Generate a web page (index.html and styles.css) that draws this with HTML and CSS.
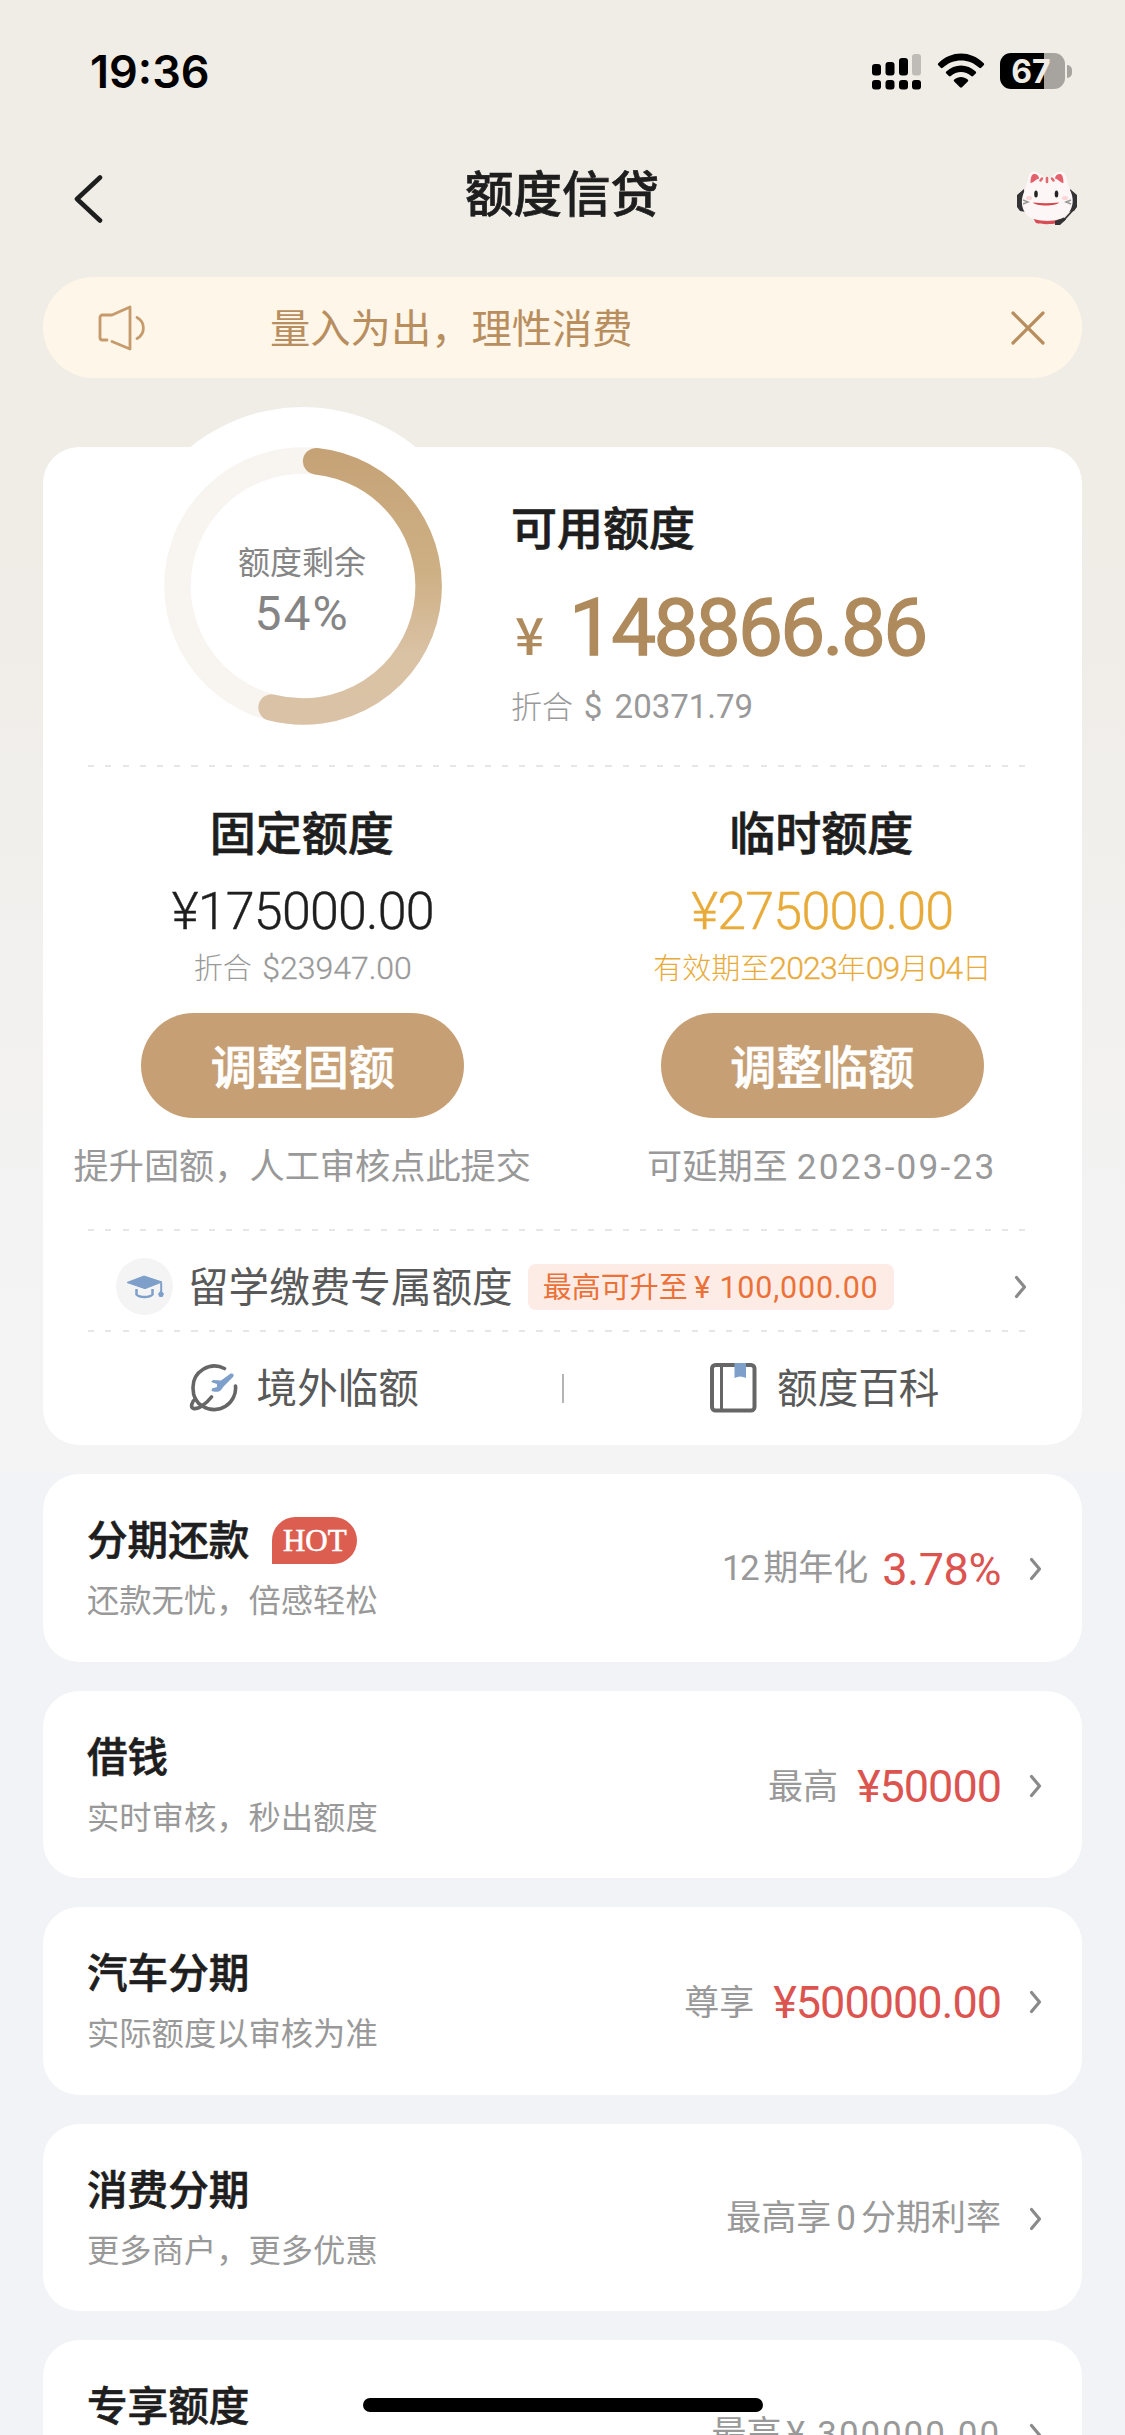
FILE: index.html
```html
<!DOCTYPE html>
<html lang="zh-CN">
<head>
<meta charset="utf-8">
<title>额度信贷</title>
<link rel="stylesheet" href="styles.css">
</head>
<body>
<svg class="defs" width="0" height="0">
  <symbol id="chevron" viewBox="0 0 14 24"><path d="M2.500 2.500 10.500 12l-8 9.500" fill="none" stroke="#8a8a8a" stroke-width="3.200" stroke-linecap="round" stroke-linejoin="round"/></symbol>
</svg>
<div class="page">
  <header class="status">
    <span class="time">19:36</span>
    <div class="status-icons">
      <svg class="signal" viewBox="0 0 49 36">
        <g><rect x="0" y="10" width="9" height="11.500" rx="3"/><rect x="13.500" y="8" width="9" height="13.500" rx="3"/><rect x="27" y="4" width="9" height="17.500" rx="3"/><rect x="40" y="0" width="9" height="21.500" rx="3" fill="#bfbcb8"/>
        <rect x="0" y="26" width="9" height="9.500" rx="3"/><rect x="13.500" y="26" width="9" height="9.500" rx="3"/><rect x="27" y="26" width="9" height="9.500" rx="3"/><rect x="40" y="26" width="9" height="9.500" rx="3"/></g>
      </svg>
      <svg class="wifi" viewBox="0 0 48 35"><path d="M1.300 10.300C14-2.800 34-2.800 46.700 10.300c.6.6.6 1.400 0 2l-2.500 2.500c-.6.6-1.300.6-1.900 0C32 5 16 5 5.700 14.800c-.6.6-1.300.6-1.900 0L1.300 12.300c-.6-.6-.6-1.400 0-2z"/><path d="M9.300 18.500c8.300-8 21.100-8 29.400 0 .6.600.6 1.400 0 2l-2.600 2.500c-.6.6-1.300.6-1.900 0-5.800-5.400-14.600-5.400-20.400 0-.6.6-1.300.6-1.900 0l-2.600-2.500c-.6-.6-.6-1.400 0-2z"/><path d="M17.300 26.600c3.900-3.400 9.500-3.400 13.400 0 .7.600.7 1.400.1 2l-5.800 5.700c-.6.600-1.400.6-2 0l-5.800-5.700c-.6-.6-.6-1.400.1-2z"/></svg>
      <div class="battery"><span class="cell">67</span><span class="nub"></span></div>
    </div>
  </header>
  <nav class="nav">
    <svg class="back" viewBox="0 0 30 50"><path d="M27 3.500 4 25l23 21.500" fill="none" stroke="#1e1e1e" stroke-width="4.600" stroke-linecap="round" stroke-linejoin="round"/></svg>
    <h1>额度信贷</h1>
    <svg class="cat" viewBox="0 0 62 56">
      <path d="M8 19 1 25v12l3 4 6 1zM54 19l7 6v12l-3 4-6 1z" fill="#333235"/>
      <path d="M13 5.500c1-4.800 8-5.500 12-.5l4 2.800h5L38 5c4-5 10.500-4.500 11.500.5L54 20c7 14 0 28-15 30H23C7 49 2 33 9 20z" fill="#fcf7f6"/>
      <path d="M14.500 13c0-5 1-9 3.500-9 3 0 5 2 5 4.500-4 1-4.500 4-8.500 4.500zM47.500 13c0-5-1-9-3.500-9-3 0-5 2-5 4.500 4 1 4.500 4 8.500 4.500z" fill="#e4606a"/>
      <path d="M31 8v4M26 8.500l-1.500 2M36 8.500l1.500 2" stroke="#e06a70" stroke-width="2.600" stroke-linecap="round"/>
      <path d="M17.500 49c9 2.500 19 2.500 27 0l-3 4c-6 1.600-16 1.600-21.500 0z" fill="#d94b55"/>
      <ellipse cx="20" cy="24" rx="1.800" ry="3.500" fill="#252326"/><ellipse cx="40.500" cy="24" rx="1.800" ry="3.500" fill="#252326"/>
      <path d="M17 32.500q13 1.500 26 0c-2 4-24 4-26 0z" fill="#d9454c"/>
      <path d="M7 30l5 2-5 2M55 30l-5 2 5 2" fill="none" stroke="#999" stroke-width="1.500"/>
      <ellipse cx="13" cy="28" rx="3" ry="2" fill="#fbd5d5"/><ellipse cx="49" cy="28" rx="3" ry="2" fill="#fbd5d5"/>
      <path d="M58 39 47 51" fill="none" stroke="#333235" stroke-width="1.800"/><path d="m39 51 9-3.500 2 2-6 5.500h-5z" fill="#333235"/>
    </svg>
  </nav>
  <div class="notice">
    <svg class="speaker" viewBox="0 0 50 46" fill="none" stroke="#c69a6b" stroke-width="2.800" stroke-linejoin="round" stroke-linecap="round"><path d="M9 35H4.500a2.500 2.500 0 0 1-2.500-2.500v-20A2.500 2.500 0 0 1 4.500 10H14L32 2v42L14 36.500"/><path d="M39 12.500c8.500 4.500 8.500 16.500 0 21"/></svg>
    <span>量入为出，理性消费</span>
    <svg class="close" viewBox="0 0 34 34"><path d="m2 2 30 30M32 2 2 32" stroke="#b98e5f" stroke-width="3.200" stroke-linecap="round"/></svg>
  </div>

  <section class="panel">
    <div class="hero">
      <div class="gauge">
        <svg viewBox="0 0 358 358">
          <defs><linearGradient id="arc" x1="0" y1="40" x2="0" y2="318" gradientUnits="userSpaceOnUse"><stop offset="0" stop-color="#c5a276"/><stop offset=".45" stop-color="#ceb085"/><stop offset=".75" stop-color="#dac2a5"/><stop offset="1" stop-color="#dac2a6"/></linearGradient></defs>
          <circle cx="179" cy="179" r="179" fill="#fff"/>
          <circle cx="179" cy="179" r="125.500" fill="none" stroke="#f8f5f1" stroke-width="26.500"/>
          <path d="M192.100 54.200A125.500 125.500 0 1 1 147.600 300.500" fill="none" stroke="url(#arc)" stroke-width="26.500" stroke-linecap="round"/>
        </svg>
        <div class="gauge-text"><span>额度剩余</span><b>54%</b></div>
      </div>
      <div class="available">
        <h2>可用额度</h2>
        <div class="big"><span class="yen">¥</span><span class="big-num">148866.86</span></div>
        <div class="conv">折合 <i>$ 20371.79</i></div>
      </div>
    </div>
    <div class="dash"></div>
    <div class="limits">
      <div class="limit">
        <h2>固定额度</h2>
        <div class="sum">¥175000.00</div>
        <div class="note">折合 <i class="usd">$23947.00</i></div>
        <button>调整固额</button>
        <p>提升固额，人工审核点此提交</p>
      </div>
      <div class="limit temp">
        <h2>临时额度</h2>
        <div class="sum">¥275000.00</div>
        <div class="note">有效期至<i>2023</i>年<i>09</i>月<i>04</i>日</div>
        <button>调整临额</button>
        <p>可延期至<span class="date">2023-09-23</span></p>
      </div>
    </div>
    <div class="dash"></div>
    <div class="study">
      <svg class="cap" viewBox="0 0 57 57"><circle cx="28.500" cy="28.500" r="28.500" fill="#f4f4f4"/><path d="M11 24.500 28 18l18 6-17 6.700z" fill="#7d9fca" stroke="#7d9fca" stroke-linejoin="round"/><path d="M20.500 31v5.500c3 3.300 13 3.300 16 0V31" fill="none" stroke="#7d9fca" stroke-width="2.500"/><path d="M45.200 25v8" stroke="#7d9fca" stroke-width="2"/><path d="m45 32 3 4-1.500 3h-3l-1.500-3z" fill="#7d9fca"/></svg>
      <span class="label">留学缴费专属额度</span>
      <span class="tag">最高可升至 <i>¥ 100,000.00</i></span>
      <svg class="chev"><use href="#chevron"/></svg>
    </div>
    <div class="dash"></div>
    <div class="links">
      <div class="link"><svg viewBox="0 0 50 50"><g fill="none" stroke="#666" stroke-width="3.600" stroke-linecap="round"><path d="M35.500 5.500A21.500 21.500 0 0 0 4 25C4 33 7.500 40 14 43.500A21.500 21.500 0 0 0 46.500 23"/><path d="M22.500 34C17 41 9 46.500 4.500 45.500 1 44.500 3 38 6.500 36"/></g><path d="m22 19 2-2 8 .5 9-6.500c2.500-1.500 5 1 3 3L35 23l-3 4c-2 2.500-7 2-9.500 1l.5-2.500 5-1.500v-3z" fill="#7d9fca"/></svg><span>境外临额</span></div>
      <i class="bar"></i>
      <div class="link"><svg viewBox="0 0 50 50"><rect x="3" y="2" width="42.500" height="45.500" rx="3.500" fill="none" stroke="#666" stroke-width="4"/><path d="M12.500 2v45" stroke="#666" stroke-width="3"/><path d="M25.500 0h11.500v15q-5.800-3-11.500 0z" fill="#7d9fca"/></svg><span>额度百科</span></div>
    </div>
  </section>

  <section class="list">
    <article class="item"><div><h3>分期还款<span class="hot">HOT</span></h3><p>还款无忧，倍感轻松</p></div><div class="right"><span><i class="num tight">12</i><s></s>期年化</span><em>3.78%</em><svg class="chev"><use href="#chevron"/></svg></div></article>
    <article class="item"><div><h3>借钱</h3><p>实时审核，秒出额度</p></div><div class="right"><span>最高</span><em class="wide">¥50000</em><svg class="chev"><use href="#chevron"/></svg></div></article>
    <article class="item"><div><h3>汽车分期</h3><p>实际额度以审核为准</p></div><div class="right"><span>尊享</span><em class="wide">¥500000.00</em><svg class="chev"><use href="#chevron"/></svg></div></article>
    <article class="item"><div><h3>消费分期</h3><p>更多商户，更多优惠</p></div><div class="right"><span>最高享<s></s><i class="num">0</i><s></s>分期利率</span><svg class="chev"><use href="#chevron"/></svg></div></article>
    <article class="item"><div><h3>专享额度</h3></div><div class="right"><span>最高<s></s><i class="num loose">¥ 300000.00</i></span><svg class="chev"><use href="#chevron"/></svg></div></article>
  </section>
  <div class="home"></div>
</div>
</body>
</html>
```
FILE: styles.css
```css
* { box-sizing: border-box; margin: 0; padding: 0; }
body { font-family: "Noto Sans CJK SC", sans-serif; color: #1e1e1e; }
i, em { font-style: normal; }
.defs { display: block; }
.page {
  position: relative;
  width: 1125px;
  height: 2435px;
  overflow: hidden;
  background: linear-gradient(#f0ece6 0, #f0ece6 500px, #f3f3f3 1200px, #f4f4f4 1473px, #f2f3f6 1473px);
}

.status { height: 130px; padding: 53px 53px 0 90px; display: flex; justify-content: space-between; align-items: flex-start; }
.time { font: 600 45px/38px Inter, sans-serif; color: #000; }
.status-icons { display: flex; }
.signal { width: 49px; height: 36px; margin-top: 1px; }
.wifi { width: 48px; height: 35px; margin-left: 16px; }
.battery { display: flex; align-items: center; gap: 2px; margin-left: 15px; height: 36px; }
.cell {
  width: 65px; height: 36px; border-radius: 11px;
  background: linear-gradient(90deg, #000 44px, #a7a4a0 44px);
  color: #f0ece6; text-align: center; font: 700 32px/37px Inter, sans-serif; padding-right: 3px;
}
.nub { width: 5px; height: 13px; background: #a7a4a0; border-radius: 0 6px 6px 0; }

.nav { height: 147px; padding: 0 47px 0 73px; display: grid; grid-template-columns: 62px 1fr 62px; align-items: start; }
.back { width: 30px; height: 50px; margin-top: 44px; }
.nav h1 { font-size: 48.500px; font-weight: 500; line-height: 60px; margin-top: 31px; text-align: center; padding-right: 27px; -webkit-text-stroke: .7px; }
.cat { width: 62px; height: 56px; margin-top: 40px; }

.notice { margin: 0 43px; height: 101px; border-radius: 51px; background: #fef6e8; display: flex; align-items: center; padding: 0 37px 0 55px; color: #b98e5f; }
.speaker { width: 50px; height: 46px; }
.notice span { flex: 1; margin-left: 122px; font-size: 40.300px; line-height: 60px; padding-bottom: 4px; }
.close { width: 34px; height: 34px; }

.panel { margin: 69px 43px 0; height: 998px; border-radius: 36px; background: #fff; }
.hero { height: 318px; display: flex; }
.gauge { width: 358px; height: 358px; margin: -40px 0 0 81px; display: grid; }
.gauge > * { grid-area: 1 / 1; }
.gauge-text { display: flex; flex-direction: column; align-items: center; color: #858585; padding: 131px 2px 0 0; }
.gauge-text span { font-size: 32px; line-height: 44px; }
.gauge-text b { font: 400 48px/60px Roboto, sans-serif; letter-spacing: 2px; margin-top: 2px; }
.available { margin-left: 29px; padding-top: 48px; }
h2 { font-size: 46px; font-weight: 500; line-height: 60px; -webkit-text-stroke: .7px; }
.big { height: 85px; margin-top: 28px; display: flex; align-items: baseline; color: #ae8a5c; }
.yen { font-size: 51px; font-weight: 500; width: 58px; padding-left: 4px; line-height: 90px; }
.big-num { font: 400 80px/90px Roboto, sans-serif; letter-spacing: -2.700px; -webkit-text-stroke: 1.300px; }
.conv { margin-top: 17px; line-height: 40px; font-size: 31px; font-weight: 300; color: #999; word-spacing: 4px; }
.conv i, .note i, .tag i { font-family: Roboto, sans-serif; font-weight: 400; }
.conv i { font-size: 33px; letter-spacing: 0; }

.dash { height: 2px; margin: 0 55px 0 45px; background: repeating-linear-gradient(90deg, #e6e6e6 0 6px, transparent 6px 17.250px); }

.limits { height: 462px; display: grid; grid-template-columns: 1fr 1fr; }
.limit { display: flex; flex-direction: column; align-items: center; padding-top: 33px; white-space: nowrap; }
.limit h2 { padding-right: 2px; }
.sum { font: 300 52px/60px Roboto, sans-serif; letter-spacing: -.8px; margin-top: 22px; -webkit-text-stroke: .4px; }
.note { font-size: 29px; font-weight: 300; line-height: 36px; margin-top: 6px; color: #999; word-spacing: 4px; }
.note i { font-size: 32px; font-weight: 300; letter-spacing: -.9px; -webkit-text-stroke: .3px; }
.note .usd { letter-spacing: 0; }
.temp .sum, .temp .note { color: #e8ab3a; }
.limit button { width: 323px; height: 105px; margin-top: 27px; padding-bottom: 4px; border: 0; border-radius: 53px; background: #c6a074; color: #fff; font: 500 46px/60px "Noto Sans CJK SC", sans-serif; -webkit-text-stroke: .7px; }
.limit p { font-size: 35.200px; line-height: 40px; margin-top: 26px; color: #999; padding-right: 1px; }
.date { margin-left: 9px; font-family: Roboto, sans-serif; letter-spacing: 2.200px; }

.study { height: 99px; display: flex; align-items: center; padding: 12px 54px 0 73px; }
.cap { width: 57px; height: 57px; }
.study .label, .link span { font-size: 40.600px; line-height: 60px; color: #595959; padding-bottom: 4px; }
.study .label { margin-left: 15px; }
.tag { width: 366px; height: 46px; margin-left: 15px; border-radius: 8px; background: #fcece5; color: #ec7138; font-size: 29px; line-height: 43px; text-align: center; white-space: nowrap; }
.tag i { font-size: 30.500px; letter-spacing: .8px; }
.chev { width: 14px; height: 24px; }
.study .chev { margin-left: auto; }

.links { height: 113px; display: flex; align-items: center; padding-bottom: 1px; }
.link { flex: 1; display: flex; justify-content: center; align-items: center; }
.link svg { width: 50px; height: 50px; margin-right: 18px; }
.links .link:first-child { padding-left: 3px; }
.links .link:last-child { padding-left: 3px; }
.bar { width: 2px; height: 29px; background: #b4b4b4; }

.list { margin: 29px 43px 0; display: grid; gap: 29px; }
.item { height: 187.500px; border-radius: 36px; background: #fff; padding: 34px 39px 0 44px; display: flex; justify-content: space-between; }
h3 { display: flex; align-items: center; height: 60px; font-size: 40.600px; font-weight: 500; line-height: 60px; -webkit-text-stroke: .6px; }
.hot { width: 85px; height: 47px; margin: 5px 0 0 23px; border-radius: 24px 24px 24px 0; background: #dc5e51; color: #fff; font: 400 31px/48px "Liberation Serif", serif; text-align: center; }
.item p { font-size: 32.300px; line-height: 44px; margin-top: 8px; color: #999; }
.right { height: 60px; margin-top: 31px; display: flex; align-items: center; white-space: nowrap; }
.right span { font-size: 35px; line-height: 60px; color: #999; padding-bottom: 4px; }
.right s { display: inline-block; width: 5px; }
.right .num { font-family: Roboto, sans-serif; }
.right .tight { letter-spacing: -1.500px; }
.right .loose { letter-spacing: 1.900px; }
.right em { margin-left: 14px; padding-top: 2px; font: 400 45px/60px Roboto, sans-serif; letter-spacing: -.4px; color: #dc5450; }
.right .wide { margin-left: 19px; letter-spacing: -1px; }
.right .chev { margin-left: 28px; }

.home { position: absolute; left: 363px; top: 2398px; width: 400px; height: 14px; border-radius: 7px; background: #000; }
```
